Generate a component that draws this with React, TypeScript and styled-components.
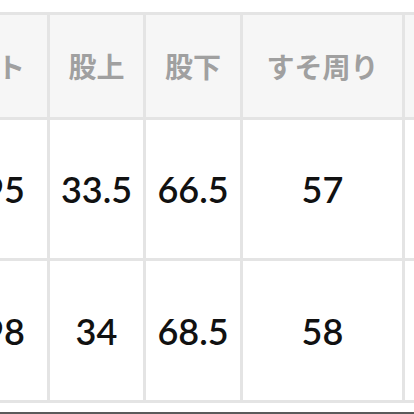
import React from 'react'
import styled, { createGlobalStyle } from 'styled-components'

const GlobalStyle = createGlobalStyle`
	html, body {
		margin: 0;
		padding: 0;
		background: #ffffff;
	}
`

const Frame = styled.div`
	width: 414px;
	height: 414px;
	overflow: hidden;
	display: flex;
	flex-direction: column;
	background: #ffffff;
`

const Table = styled.div`
	margin-top: 12px;
	margin-left: -73px;
	display: grid;
	grid-template-columns: 120px 93px 94px 159px 160px;
	grid-template-rows: 102px 138px 139px;
	gap: 3px;
	padding: 3px 0;
	background: #e4e4e4;
	width: max-content;
`

const Cell = styled.div<{ $head?: boolean; $first?: boolean }>`
	display: flex;
	align-items: center;
	justify-content: ${({ $first }) => ($first ? 'flex-end' : 'center')};
	padding-right: ${({ $first }) => ($first ? '22px' : '0')};
	background: ${({ $head }) => ($head ? '#f6f6f6' : '#ffffff')};
	color: ${({ $head }) => ($head ? '#a0a0a0' : '#111111')};
	font-family: ${({ $head }) =>
		$head ? '"Noto Sans CJK JP", sans-serif' : 'Lato, "Noto Sans", sans-serif'};
	font-size: ${({ $head }) => ($head ? '28px' : '36px')};
	font-weight: ${({ $head }) => ($head ? 700 : 600)};
	white-space: nowrap;
`

const Spacer = styled.div`
	flex: 1;
	background: #ffffff;
`

const BottomEdge = styled.div`
	height: 2px;
	background: #5a5a5a;
`

const headers = ['ウエスト', '股上', '股下', 'すそ周り', 'ワタリ']
const rows = [
	['95', '33.5', '66.5', '57', '34'],
	['98', '34', '68.5', '58', '35'],
]

const App = () => {
	return (
		<>
			<GlobalStyle />
			<Frame>
				<Table>
					{headers.map((h, i) => (
						<Cell key={h} $head $first={i === 0}>
							{h}
						</Cell>
					))}
					{rows.map((row, r) =>
						row.map((v, i) => (
							<Cell key={`${r}-${i}`} $first={i === 0}>
								{v}
							</Cell>
						))
					)}
				</Table>
				<Spacer />
				<BottomEdge />
			</Frame>
		</>
	)
}

export default App
